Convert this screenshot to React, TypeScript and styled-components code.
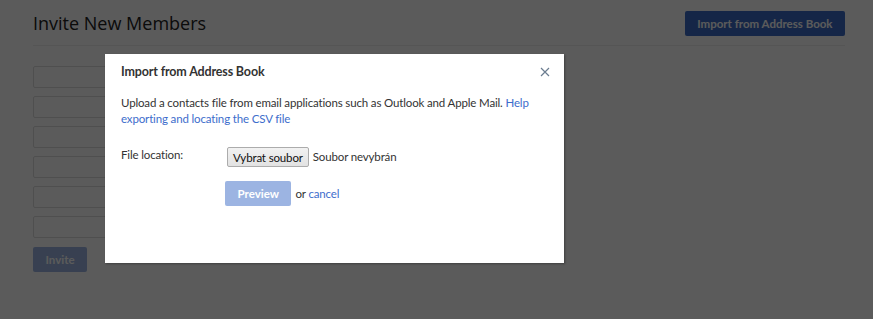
import styled, { createGlobalStyle } from "styled-components";

const GlobalStyle = createGlobalStyle`
  body {
    margin: 0;
    background: #fff;
    font-family: "Open Sans", "Liberation Sans", sans-serif;
  }
`;

const Page = styled.div`
  position: relative;
  width: 873px;
  height: 319px;
  box-sizing: border-box;
  padding: 11px 28px 0 33px;
  overflow: hidden;
`;

const Header = styled.div`
  display: flex;
  justify-content: space-between;
  align-items: flex-start;
  height: 34px;
  border-bottom: 1px solid #eee;
`;

const Title = styled.h1`
  margin: 0;
  font-size: 18px;
  font-weight: 400;
  line-height: 24px;
  color: #222;
`;

const Button = styled.button<{ $disabled?: boolean }>`
  font-family: Lato, "Open Sans", sans-serif;
  font-weight: 700;
  font-size: 11.5px;
  color: #fff;
  background: #3b6cc6;
  border: none;
  border-radius: 2px;
  padding: 0 12.5px;
  height: 25px;
  opacity: ${(p) => (p.$disabled ? 0.5 : 1)};
`;

const Fields = styled.div`
  display: flex;
  flex-direction: column;
  gap: 8px;
  margin-top: 20px;
`;

const Field = styled.div`
  width: 260px;
  height: 20px;
  border: 1px solid #ddd;
  border-radius: 2px;
`;

const InviteRow = styled.div`
  margin-top: 9px;
`;

const Overlay = styled.div`
  position: absolute;
  inset: 0;
  background: rgba(0, 0, 0, 0.643);
`;

const Modal = styled.div`
  position: absolute;
  left: 105px;
  top: 54px;
  width: 459px;
  height: 209px;
  box-sizing: border-box;
  background: #fff;
  box-shadow: 1px 1px 2px rgba(0, 0, 0, 0.3);
  padding: 9px 16px 0;
  color: #333;
  font-family: Lato, "Open Sans", sans-serif;
  font-size: 11.5px;
  letter-spacing: -0.15px;
`;

const ModalHead = styled.div`
  display: flex;
  justify-content: space-between;
  align-items: center;
  height: 18px;
`;

const ModalTitle = styled.h2`
  margin: 0;
  font-size: 12.5px;
  font-weight: 700;
  line-height: 18px;
  color: #333;
`;

const Close = styled.button`
  background: none;
  border: none;
  padding: 0;
  margin-right: -2px;
  display: flex;
  cursor: pointer;
`;

const Intro = styled.p`
  margin: 14px 0 0;
  line-height: 16px;
`;

const Link = styled.a`
  color: #3d6dcc;
  text-decoration: none;
`;

const FormRow = styled.div`
  display: flex;
  align-items: flex-start;
  margin-top: 20px;
`;

const Label = styled.label`
  width: 106px;
  line-height: 16px;
`;

const FileButton = styled.button`
  font-family: Lato, "Open Sans", sans-serif;
  font-size: 11.5px;
  letter-spacing: -0.15px;
  color: #111;
  height: 20px;
  padding: 0 5px;
  background: linear-gradient(#f2f2f2, #e2e2e2);
  border: 1px solid #acacac;
  border-radius: 2px;
`;

const FileName = styled.span`
  margin-left: 4px;
  line-height: 20px;
`;

const Actions = styled.div`
  display: flex;
  align-items: center;
  gap: 4px;
  margin: 14px 0 0 104px;
`;

export default function App() {
  return (
    <>
      <GlobalStyle />
      <Page>
        <Header>
          <Title>Invite New Members</Title>
          <Button>Import from Address Book</Button>
        </Header>
        <Fields>
          {Array.from({ length: 6 }).map((_, i) => (
            <Field key={i} />
          ))}
        </Fields>
        <InviteRow>
          <Button $disabled>Invite</Button>
        </InviteRow>
        <Overlay />
        <Modal>
          <ModalHead>
            <ModalTitle>Import from Address Book</ModalTitle>
            <Close aria-label="close">
              <svg width="10" height="10" viewBox="0 0 10 10">
                <path d="M1 1L9 9M9 1L1 9" stroke="#6b7d90" strokeWidth="1.2" />
              </svg>
            </Close>
          </ModalHead>
          <Intro>
            Upload a contacts file from email applications such as Outlook and Apple Mail.{" "}
            <Link href="#">Help exporting and locating the CSV file</Link>
          </Intro>
          <FormRow>
            <Label>File location:</Label>
            <FileButton>Vybrat soubor</FileButton>
            <FileName>Soubor nevybrán</FileName>
          </FormRow>
          <Actions>
            <Button $disabled>Preview</Button>
            <span>
              or <Link href="#">cancel</Link>
            </span>
          </Actions>
        </Modal>
      </Page>
    </>
  );
}
